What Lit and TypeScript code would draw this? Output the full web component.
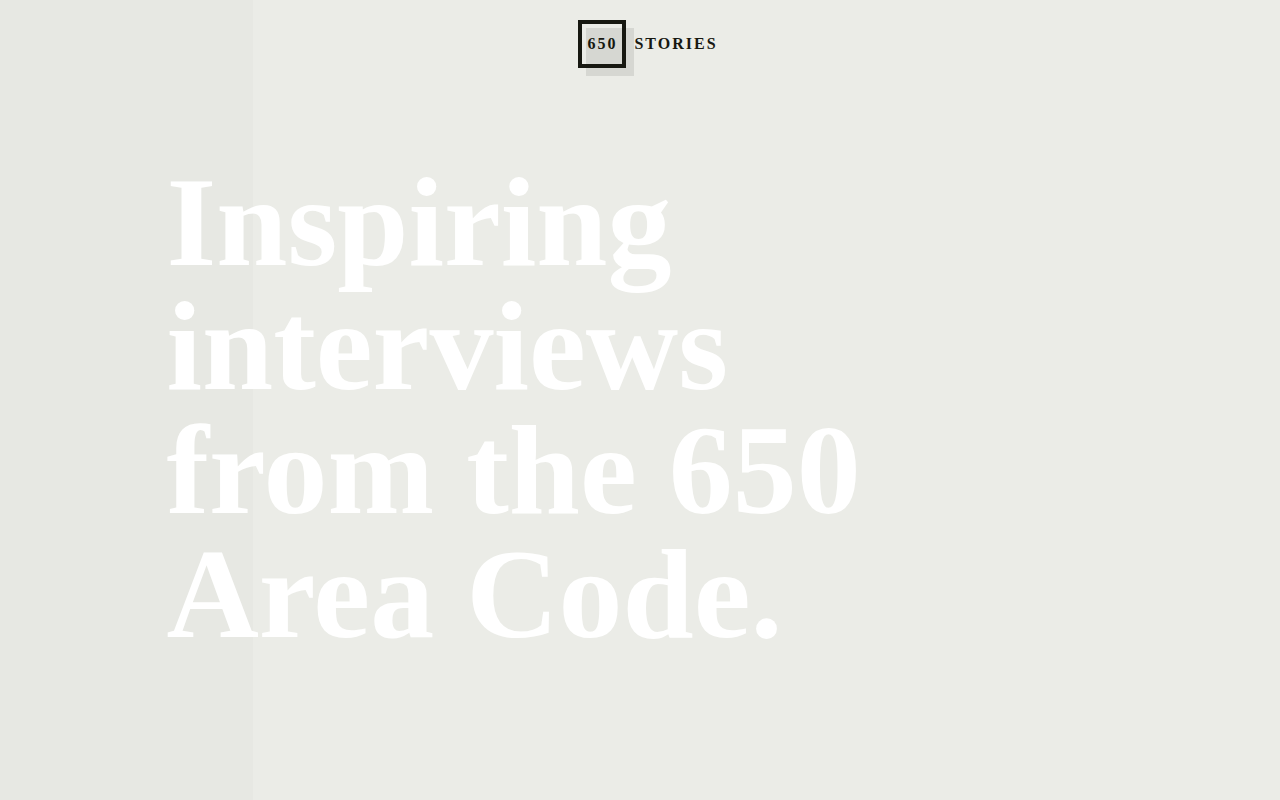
import { LitElement, html, css } from "lit";
import { customElement } from "lit/decorators.js";

@customElement("app-root")
export class AppRoot extends LitElement {
  static styles = css`
    :host {
      display: block;
      min-height: 100vh;
      background: linear-gradient(to right, #e7e8e3 253px, #ebece7 253px);
      color: #171811;
      font-family: "Liberation Serif", "Times New Roman", serif;
      font-weight: 700;
    }
    .bar {
      display: flex;
      justify-content: center;
      padding: 20px 0;
    }
    .logo {
      display: flex;
      align-items: center;
      gap: 8px;
      color: inherit;
      text-decoration: none;
      font-size: 16px;
      line-height: 24px;
      letter-spacing: 2px;
      padding-left: 16px;
    }
    .box {
      box-sizing: border-box;
      width: 48px;
      height: 48px;
      display: flex;
      align-items: center;
      justify-content: center;
      border: 4px solid #171811;
      background: linear-gradient(#d6d7d2, #d6d7d2) 4px 4px no-repeat;
      box-shadow: 8px 8px 0 #d6d7d2;
    }
    .hero {
      padding: 72px 13%;
    }
    h1 {
      margin: 0;
      max-width: 720px;
      color: #fff;
      font-size: 128px;
      line-height: 124px;
    }
  `;

  render() {
    return html`
      <header class="bar">
        <a class="logo" href="#"><span class="box">650</span><span>STORIES</span></a>
      </header>
      <main class="hero">
        <h1>Inspiring interviews from the 650 Area Code.</h1>
      </main>
    `;
  }
}
